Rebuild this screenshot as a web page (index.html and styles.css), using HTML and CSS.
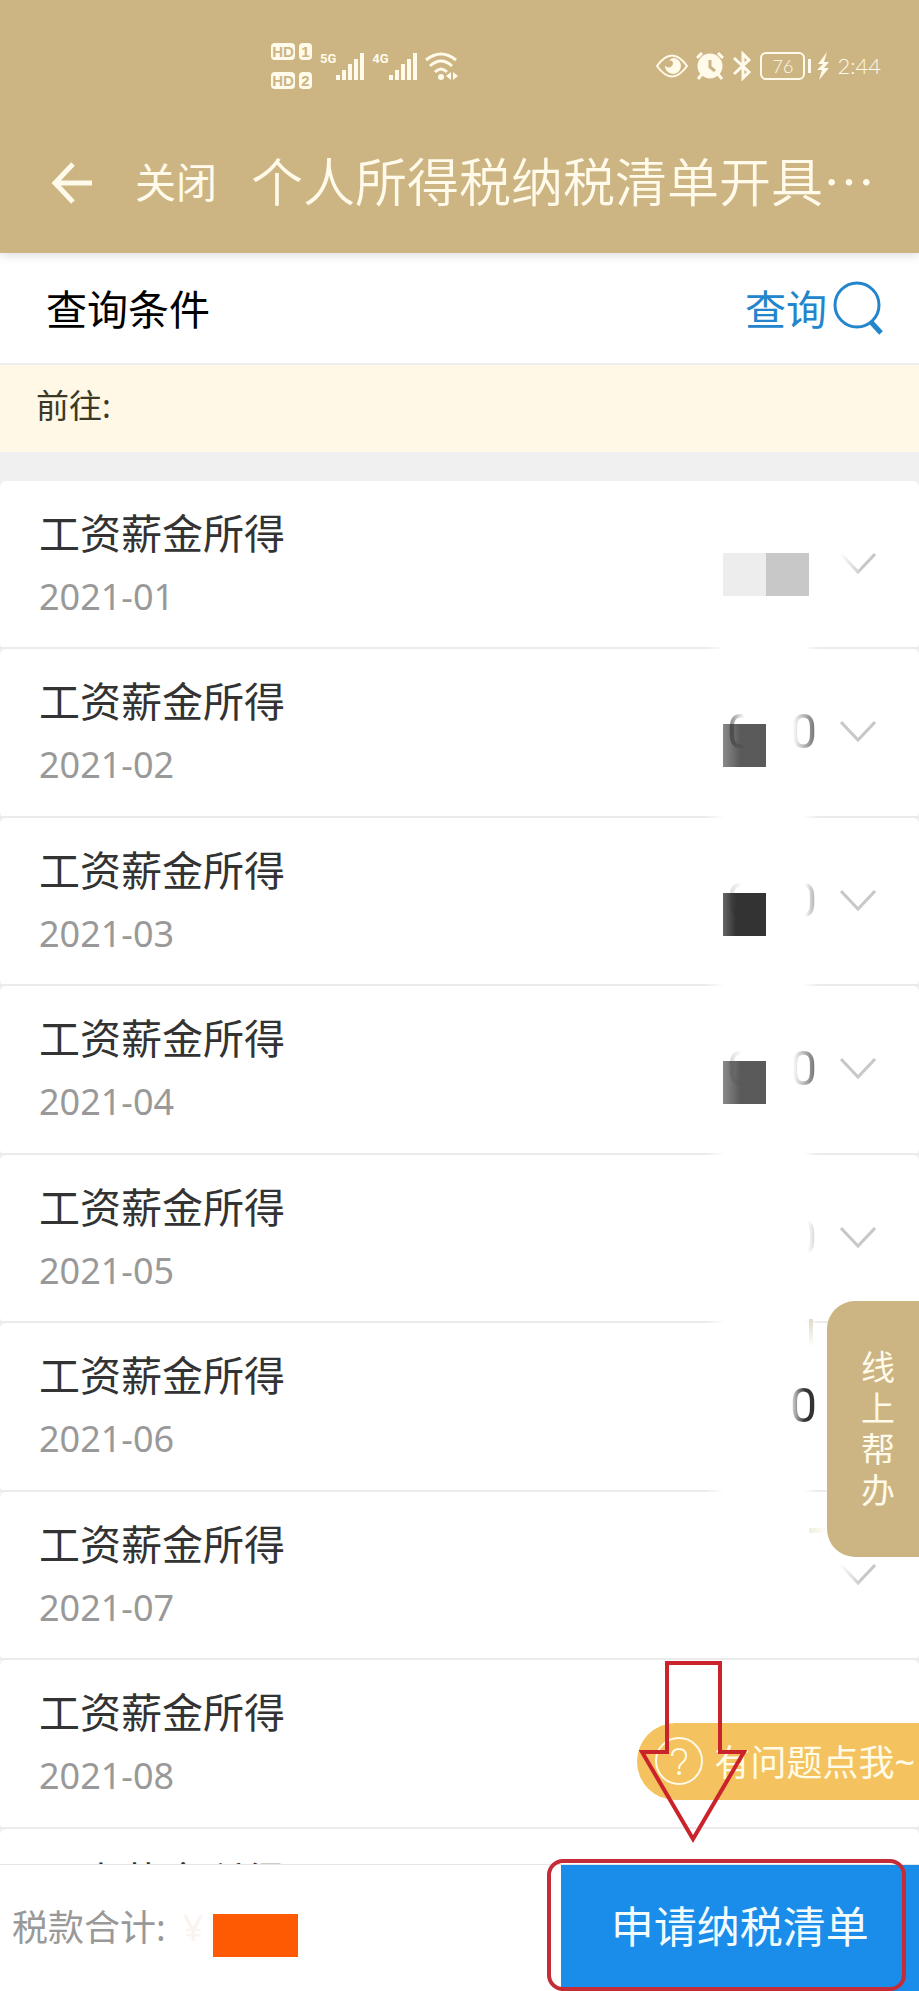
FILE: index.html
```html
<!DOCTYPE html>
<html lang="zh-CN">
<head>
    <meta charset="UTF-8">
    <meta name="viewport" content="width=device-width, initial-scale=1.0">
    <title>个人所得税纳税清单开具</title>
    <link rel="stylesheet" href="styles.css">
</head>
<body>
    <!-- 图标 -->
    <svg width="0" height="0" class="sprite">
        <symbol id="signal" viewBox="0 0 28 28">
            <path d="M2 28V23M8 28V18M14 28V12M20 28V7M26 28V1" fill="none" stroke="currentColor" stroke-width="4"/>
        </symbol>
        <symbol id="chevron" viewBox="0 0 36 22">
            <path d="M1 1l17 18L35 1" fill="none" stroke="currentColor" stroke-width="3"/>
        </symbol>
    </svg>

    <header class="header">
        <!-- 状态栏 -->
        <div class="status">
            <div class="status-left">
                <div class="hd">
                    <span class="hd-name">HD</span><span class="hd-sim">1</span>
                    <span class="hd-name">HD</span><span class="hd-sim">2</span>
                </div>
                <div class="net"><span>5G</span><svg width="28" height="28"><use href="#signal"/></svg></div>
                <div class="net"><span>4G</span><svg width="28" height="28"><use href="#signal"/></svg></div>
                <svg width="34" height="28" viewBox="0 0 34 28" fill="none" stroke="currentColor" stroke-width="3">
                    <path d="M1 8Q16-4 31 8M5 14Q16 4 27 14M10 20Q16 14 22 20"/>
                    <circle cx="16" cy="25" r="3" fill="currentColor" stroke="none"/>
                    <path d="M26 20v8l-5-4zM28 20v8l5-4z" fill="currentColor" stroke="none"/>
                </svg>
            </div>
            <div class="status-right">
                <svg width="32" height="24" viewBox="0 0 32 24">
                    <path d="M1 12Q16-9 31 12Q16 33 1 12z" fill="none" stroke="currentColor" stroke-width="2"/>
                    <path d="M18 4a8 8 0 1 1-9 7c1 4 8 3 8-2 0-2-2-3-4-2 1-2 3-3 5-3z" fill="currentColor"/>
                </svg>
                <svg width="28" height="28" viewBox="0 0 28 28" fill="none" stroke="currentColor" stroke-width="3">
                    <circle cx="14" cy="14" r="11" fill="currentColor"/>
                    <path d="M1 6l5-5M22 1l5 5M6 22l-4 5M22 22l4 5"/>
                    <path d="M14 8v7l5 4" class="alarm-hand"/>
                </svg>
                <svg width="20" height="30" viewBox="0 0 20 30" fill="none" stroke="currentColor" stroke-width="3">
                    <path d="M2 7l15 14-6 6V3l6 6L2 23"/>
                </svg>
                <div class="battery">76</div>
                <svg width="12" height="28" viewBox="0 0 12 28">
                    <path d="M10 0L1 12h5l-6 6h5L2 28 12 16H7l5-6H7z" fill="currentColor"/>
                </svg>
                <time>2:44</time>
            </div>
        </div>

        <!-- 标题栏 -->
        <nav class="navbar">
            <button type="button" class="back" aria-label="返回">
                <svg width="42" height="42" viewBox="0 0 42 42" fill="none" stroke="currentColor" stroke-width="5">
                    <path d="M22 2L4 21l18 19M4 21h37"/>
                </svg>
            </button>
            <a href="#" class="close">关闭</a>
            <h1>个人所得税纳税清单开具…</h1>
        </nav>
    </header>

    <div class="query">
        <h2>查询条件</h2>
        <button type="button" class="search">
            查询
            <svg width="50" height="56" viewBox="0 0 50 56" fill="none" stroke="currentColor">
                <circle cx="24" cy="26" r="22" stroke-width="3"/>
                <path d="M38 43l10 11" stroke-width="5"/>
            </svg>
        </button>
    </div>

    <p class="notice">前往:</p>

    <!-- 收入列表 -->
    <ul class="list">
        <li class="wiped">
            <div class="info"><h3>工资薪金所得</h3><p>2021-01</p></div>
            <div class="amount"><i class="block light"></i></div>
            <button type="button" class="more faded" aria-label="展开"><svg width="36" height="22"><use href="#chevron"/></svg></button>
        </li>
        <li class="wiped">
            <div class="info"><h3>工资薪金所得</h3><p>2021-02</p></div>
            <div class="amount"><i class="block"></i><span class="head">0</span><span class="tail">0</span></div>
            <button type="button" class="more" aria-label="展开"><svg width="36" height="22"><use href="#chevron"/></svg></button>
        </li>
        <li class="wiped">
            <div class="info"><h3>工资薪金所得</h3><p>2021-03</p></div>
            <div class="amount"><i class="block dark"></i><span class="head pale">0</span><span class="tail half">0</span></div>
            <button type="button" class="more" aria-label="展开"><svg width="36" height="22"><use href="#chevron"/></svg></button>
        </li>
        <li class="wiped">
            <div class="info"><h3>工资薪金所得</h3><p>2021-04</p></div>
            <div class="amount"><i class="block"></i><span class="head pale">0</span><span class="tail">0</span></div>
            <button type="button" class="more" aria-label="展开"><svg width="36" height="22"><use href="#chevron"/></svg></button>
        </li>
        <li class="wiped">
            <div class="info"><h3>工资薪金所得</h3><p>2021-05</p></div>
            <div class="amount"><span class="tail trace">0</span></div>
            <button type="button" class="more" aria-label="展开"><svg width="36" height="22"><use href="#chevron"/></svg></button>
        </li>
        <li class="wiped">
            <div class="info"><h3>工资薪金所得</h3><p>2021-06</p></div>
            <div class="amount"><span class="tail full">0</span></div>
            <button type="button" class="more" aria-label="展开"><svg width="36" height="22"><use href="#chevron"/></svg></button>
        </li>
        <li>
            <div class="info"><h3>工资薪金所得</h3><p>2021-07</p></div>
            <button type="button" class="more faded" aria-label="展开"><svg width="36" height="22"><use href="#chevron"/></svg></button>
        </li>
        <li>
            <div class="info"><h3>工资薪金所得</h3><p>2021-08</p></div>
        </li>
        <li>
            <div class="info"><h3>工资薪金所得</h3></div>
        </li>
    </ul>

    <!-- 底部栏 -->
    <footer class="footer">
        <a href="#" class="online">线上帮办</a>
        <a href="#" class="help">
            <svg width="48" height="48" viewBox="0 0 48 48" fill="none" stroke="currentColor" stroke-width="2">
                <circle cx="24" cy="24" r="23"/>
                <path d="M17 19q0-7 7-7t7 7q0 4-4 7-3 2-3 6" />
                <circle cx="24" cy="36" r="1"/>
            </svg>
            有问题点我~
        </a>
        <p class="total">税款合计: <span class="sum">¥</span></p>
        <div class="apply-box">
            <button type="button" class="apply">申请纳税清单</button>
            <div class="frame"></div>
            <svg class="arrow" width="108" height="184" viewBox="0 0 108 184">
                <path d="M28 4h53v89h24L54 180 3 93h25z" fill="none" stroke="currentColor" stroke-width="4"/>
            </svg>
        </div>
    </footer>
</body>
</html>
```
FILE: styles.css
```css
* {
    box-sizing: border-box;
}

body {
    display: flex;
    flex-direction: column;
    height: 100vh;
    margin: 0;
    overflow: hidden;
    background: #fff;
    color: #333;
    font-family: "Noto Sans", "Noto Sans CJK SC", sans-serif;
}

h1, h2, h3, p, ul {
    margin: 0;
    padding: 0;
    font-weight: 400;
}

button {
    padding: 0;
    border: 0;
    background: none;
    font-family: inherit;
}

a {
    color: inherit;
    text-decoration: none;
}

svg {
    display: block;
    flex: none;
}

.sprite {
    position: absolute;
}

/* 顶部 */
.header {
    position: relative;
    flex: none;
    background: #ccb583;
    color: #fffaea;
    box-shadow: 0 2px 10px rgba(0, 0, 0, 0.15);
}

.status {
    display: flex;
    justify-content: space-between;
    height: 112px;
    padding: 20px 38px 0 271px;
}

.status-left,
.status-right {
    display: flex;
    align-items: center;
    gap: 8px;
}

.hd {
    display: grid;
    grid-template-columns: 24px 13px;
    gap: 12px 4px;
    color: #ccb583;
    font: 700 15px/17px "Liberation Sans Narrow", "Liberation Sans", sans-serif;
    text-align: center;
}

.hd span {
    border-radius: 4px;
    background: #fffaea;
}

.net {
    display: flex;
    align-items: flex-start;
    font: 700 13px/14px Roboto, sans-serif;
}

.alarm-hand {
    stroke: #ccb583;
}

.battery {
    position: relative;
    width: 45px;
    margin-right: 4px;
    border: 2px solid;
    border-radius: 6px;
    font: 300 18px/24px Lato, sans-serif;
    text-align: center;
}

.battery::after {
    content: "";
    position: absolute;
    top: 5px;
    right: -8px;
    width: 3px;
    height: 14px;
    background: currentColor;
}

.status time {
    font: 300 22px/28px Lato, sans-serif;
}

.navbar {
    display: flex;
    align-items: center;
    height: 141px;
    padding-left: 51px;
}

.back {
    color: inherit;
}

.close,
.navbar h1 {
    padding-bottom: 6px;
}

.close {
    margin: 0 34px 0 42px;
    font-size: 41px;
}

.navbar h1 {
    font-size: 52px;
    font-weight: 350;
    font-family: "Noto Sans CJK SC", sans-serif;
    white-space: nowrap;
}

/* 查询条件 */
.query {
    display: flex;
    align-items: center;
    justify-content: space-between;
    flex: none;
    height: 112px;
    padding: 0 36px 2px 46px;
    border-bottom: 2px solid #ededed;
}

.query h2 {
    color: #000;
    font-size: 41px;
}

.search {
    display: flex;
    align-items: center;
    gap: 6px;
    color: #2385cb;
    font-size: 41px;
}

.notice {
    flex: none;
    height: 87px;
    padding-left: 36px;
    background: #fff8e6;
    color: #3c3826;
    font-size: 33px;
    line-height: 82px;
}

/* 收入列表 */
.list {
    flex: 1;
    min-height: 0;
    padding-top: 29px;
    overflow: hidden;
    background: #f0f0f0;
    list-style: none;
}

.list li {
    position: relative;
    display: flex;
    height: 168px;
    padding: 0 43px 0 39px;
    border-radius: 6px;
    background: #fff;
}

.list li:nth-child(even) {
    height: 169px;
}

.list li::after {
    content: "";
    position: absolute;
    right: 0;
    bottom: 0;
    left: 0;
    height: 2px;
    background: #ebebeb;
}

.list .wiped::after {
    background: linear-gradient(to right, #ebebeb calc(100% - 214px), #fff calc(100% - 194px), #fff calc(100% - 116px), #ebebeb calc(100% - 100px));
}

.info {
    flex: 1;
    padding-top: 24px;
}

.info h3 {
    font-size: 41px;
    line-height: 56px;
}

.info p {
    margin-top: 14px;
    color: #999;
    font-size: 36px;
    line-height: 44px;
}

.amount {
    position: relative;
    display: flex;
    justify-content: space-between;
    width: 94px;
    margin-right: 23px;
    padding-left: 4px;
    font: 48px/166px Roboto, sans-serif;
}

.amount span {
    position: relative;
    background-clip: text;
    color: transparent;
}

.tail {
    margin-left: auto;
    background-image: linear-gradient(to right, #fff 10%, #777 90%);
}

.tail.half {
    background-image: linear-gradient(to right, #fff 55%, #aaa 95%);
}

.tail.trace {
    background-image: linear-gradient(to right, #fff 65%, #ccc 100%);
}

.tail.full {
    background-image: linear-gradient(to right, #ccc 10%, #333 55%);
}

.head {
    background-image: linear-gradient(to right, rgba(40, 40, 40, 0.5) 15%, transparent 65%);
}

.head.pale {
    background-image: linear-gradient(to right, rgba(40, 40, 40, 0.15) 15%, transparent 55%);
}

/* 金额马赛克 */
.block {
    position: absolute;
    top: 75px;
    left: 0;
    width: 43px;
    height: 43px;
    background: linear-gradient(to right, #8a8a8a, #5a5a5a 40%);
}

.block.dark {
    background: linear-gradient(to right, #666, #333 30%);
}

.block.light {
    top: 72px;
    width: 86px;
    background: linear-gradient(to right, #ededed 50%, #c8c8c8 50%);
}

.more {
    align-self: flex-start;
    margin-top: 72px;
    color: #c8c8c8;
}

.more.faded {
    mask-image: linear-gradient(to right, transparent, #000 60%);
}

/* 底部栏 */
.footer {
    position: relative;
    display: flex;
    flex: none;
    align-items: stretch;
    justify-content: space-between;
    height: 127px;
    border-top: 1px solid #e6e6e6;
    background: #fff;
}

.total {
    padding-left: 12px;
    color: #999;
    font-size: 36px;
    line-height: 126px;
    white-space: nowrap;
}

.sum {
    position: relative;
    margin-left: 8px;
    color: #fbf3ee;
}

.sum::after {
    content: "";
    position: absolute;
    top: 11px;
    left: 30px;
    width: 85px;
    height: 43px;
    background: #fd5a03;
}

.apply-box {
    position: relative;
    width: 39%;
}

.apply {
    width: 100%;
    height: 100%;
    padding-bottom: 8px;
    background: #198de9;
    color: #f2fcff;
    font-size: 43px;
}

/* 红色标注 */
.frame {
    position: absolute;
    top: -6px;
    right: 13px;
    bottom: 0;
    left: -14px;
    border: 4px solid #c42c38;
    border-radius: 16px;
}

.arrow {
    position: absolute;
    bottom: calc(100% + 22px);
    left: 78px;
    color: #cb232b;
}

/* 悬浮按钮 */
.online {
    position: absolute;
    right: 0;
    bottom: calc(100% + 308px);
    width: 92px;
    padding: 46px 24px 46px 34px;
    border-radius: 28px 0 0 28px;
    background: #ccb583;
    color: #fffaea;
    font-size: 34px;
    line-height: 41px;
    word-break: break-all;
}

.online::before,
.online::after {
    content: "";
    position: absolute;
    left: -18px;
}

.online::before {
    top: 18px;
    width: 4px;
    height: 28px;
    background: linear-gradient(#dddac6, #fff);
}

.online::after {
    bottom: 24px;
    width: 18px;
    height: 5px;
    background: linear-gradient(to right, #f0eedd, #fff);
}

.help {
    position: absolute;
    right: 0;
    bottom: calc(100% + 65px);
    display: flex;
    align-items: center;
    gap: 11px;
    height: 77px;
    padding: 0 4px 2px 18px;
    border-radius: 39px 0 0 39px;
    background: #f4c25f;
    color: #fffbe6;
    font-size: 36px;
    white-space: nowrap;
}
```
